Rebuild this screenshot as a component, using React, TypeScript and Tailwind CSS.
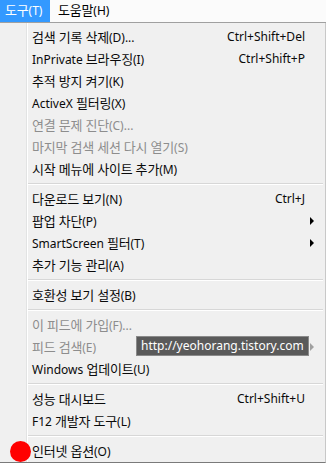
import React from "react";

type Item =
  | { type: "sep" }
  | { type: "item"; label: string; shortcut?: string; disabled?: boolean; arrow?: boolean };

const items: Item[] = [
  { type: "item", label: "검색 기록 삭제(D)...", shortcut: "Ctrl+Shift+Del" },
  { type: "item", label: "InPrivate 브라우징(I)", shortcut: "Ctrl+Shift+P" },
  { type: "item", label: "추적 방지 켜기(K)" },
  { type: "item", label: "ActiveX 필터링(X)" },
  { type: "item", label: "연결 문제 진단(C)...", disabled: true },
  { type: "item", label: "마지막 검색 세션 다시 열기(S)", disabled: true },
  { type: "item", label: "시작 메뉴에 사이트 추가(M)" },
  { type: "sep" },
  { type: "item", label: "다운로드 보기(N)", shortcut: "Ctrl+J" },
  { type: "item", label: "팝업 차단(P)", arrow: true },
  { type: "item", label: "SmartScreen 필터(T)", arrow: true },
  { type: "item", label: "추가 기능 관리(A)" },
  { type: "sep" },
  { type: "item", label: "호환성 보기 설정(B)" },
  { type: "sep" },
  { type: "item", label: "이 피드에 가입(F)...", disabled: true },
  { type: "item", label: "피드 검색(E)", disabled: true, arrow: true },
  { type: "item", label: "Windows 업데이트(U)" },
  { type: "sep" },
  { type: "item", label: "성능 대시보드", shortcut: "Ctrl+Shift+U" },
  { type: "item", label: "F12 개발자 도구(L)" },
  { type: "sep" },
  { type: "item", label: "인터넷 옵션(O)" },
];

const font = { fontFamily: '"Noto Sans", "Noto Sans CJK KR", sans-serif' };

function Label({ text }: { text: string }) {
  const parts = text.split(/([\uAC00-\uD7A3]+(?: [\uAC00-\uD7A3]+)*)/);
  return (
    <>
      {parts.map((p, i) =>
        /[\uAC00-\uD7A3]/.test(p) ? (
          <span key={i} className="text-[13px] tracking-[-0.2px]">
            {p}
          </span>
        ) : (
          <span key={i}>{p}</span>
        )
      )}
    </>
  );
}

export default function App() {
  return (
    <div className="w-[326px] h-[466px] bg-white overflow-hidden text-[12px] relative" style={font}>
      <div className="h-[23px] bg-[#fbfbfb] border-b border-[#a0a0a0] flex items-stretch">
        <div className="w-[50px] bg-[#3399ff] text-white flex items-center pl-[5px] whitespace-nowrap">
          <Label text="도구(T)" />
        </div>
        <div className="flex items-center pl-[8px] text-black whitespace-nowrap">
          <Label text="도움말(H)" />
        </div>
      </div>
      <div className="relative h-[440px] bg-[#f0f0f0] border-b border-[#7a7a7a] border-r border-r-[#c8c8c8] pt-[3px]">
        <div className="absolute left-[26px] top-0 bottom-0 w-[2px] flex">
          <div className="w-px bg-[#e2e3e3]" />
          <div className="w-px bg-white" />
        </div>
        {items.map((it, i) =>
          it.type === "sep" ? (
            <div key={i} className="h-[8px] flex flex-col justify-center pl-[28px] pr-[2px]">
              <div className="h-px bg-[#d7d7d7]" />
              <div className="h-px bg-white" />
            </div>
          ) : (
            <div
              key={i}
              className={`h-[22px] flex items-center pl-[32px] pr-[20px] leading-none ${
                it.disabled ? "text-[#8d8d8d]" : "text-[#0a0a0a]"
              }`}
            >
              <span className="flex-1 whitespace-nowrap">
                <Label text={it.label} />
              </span>
              {it.shortcut && <span className="whitespace-nowrap">{it.shortcut}</span>}
              {it.arrow && (
                <span className="absolute right-[10px]">
                  <svg width="5" height="8" viewBox="0 0 5 8">
                    <path d="M0 0 L4 4 L0 8 Z" fill={it.disabled ? "#a0a0a0" : "#000"} />
                  </svg>
                </span>
              )}
            </div>
          )
        )}
        <div className="absolute left-[10px] top-[418px] w-[21px] h-[21px] rounded-full bg-[#ff0000]" />
      </div>
      <div className="absolute left-[136px] top-[336px] w-[173px] h-[20px] bg-[#5a5a5a] border border-[#8a8a8a] text-white text-[12px] flex items-center pl-[4px] leading-none whitespace-nowrap">
        http://yeohorang.tistory.com
      </div>
    </div>
  );
}
